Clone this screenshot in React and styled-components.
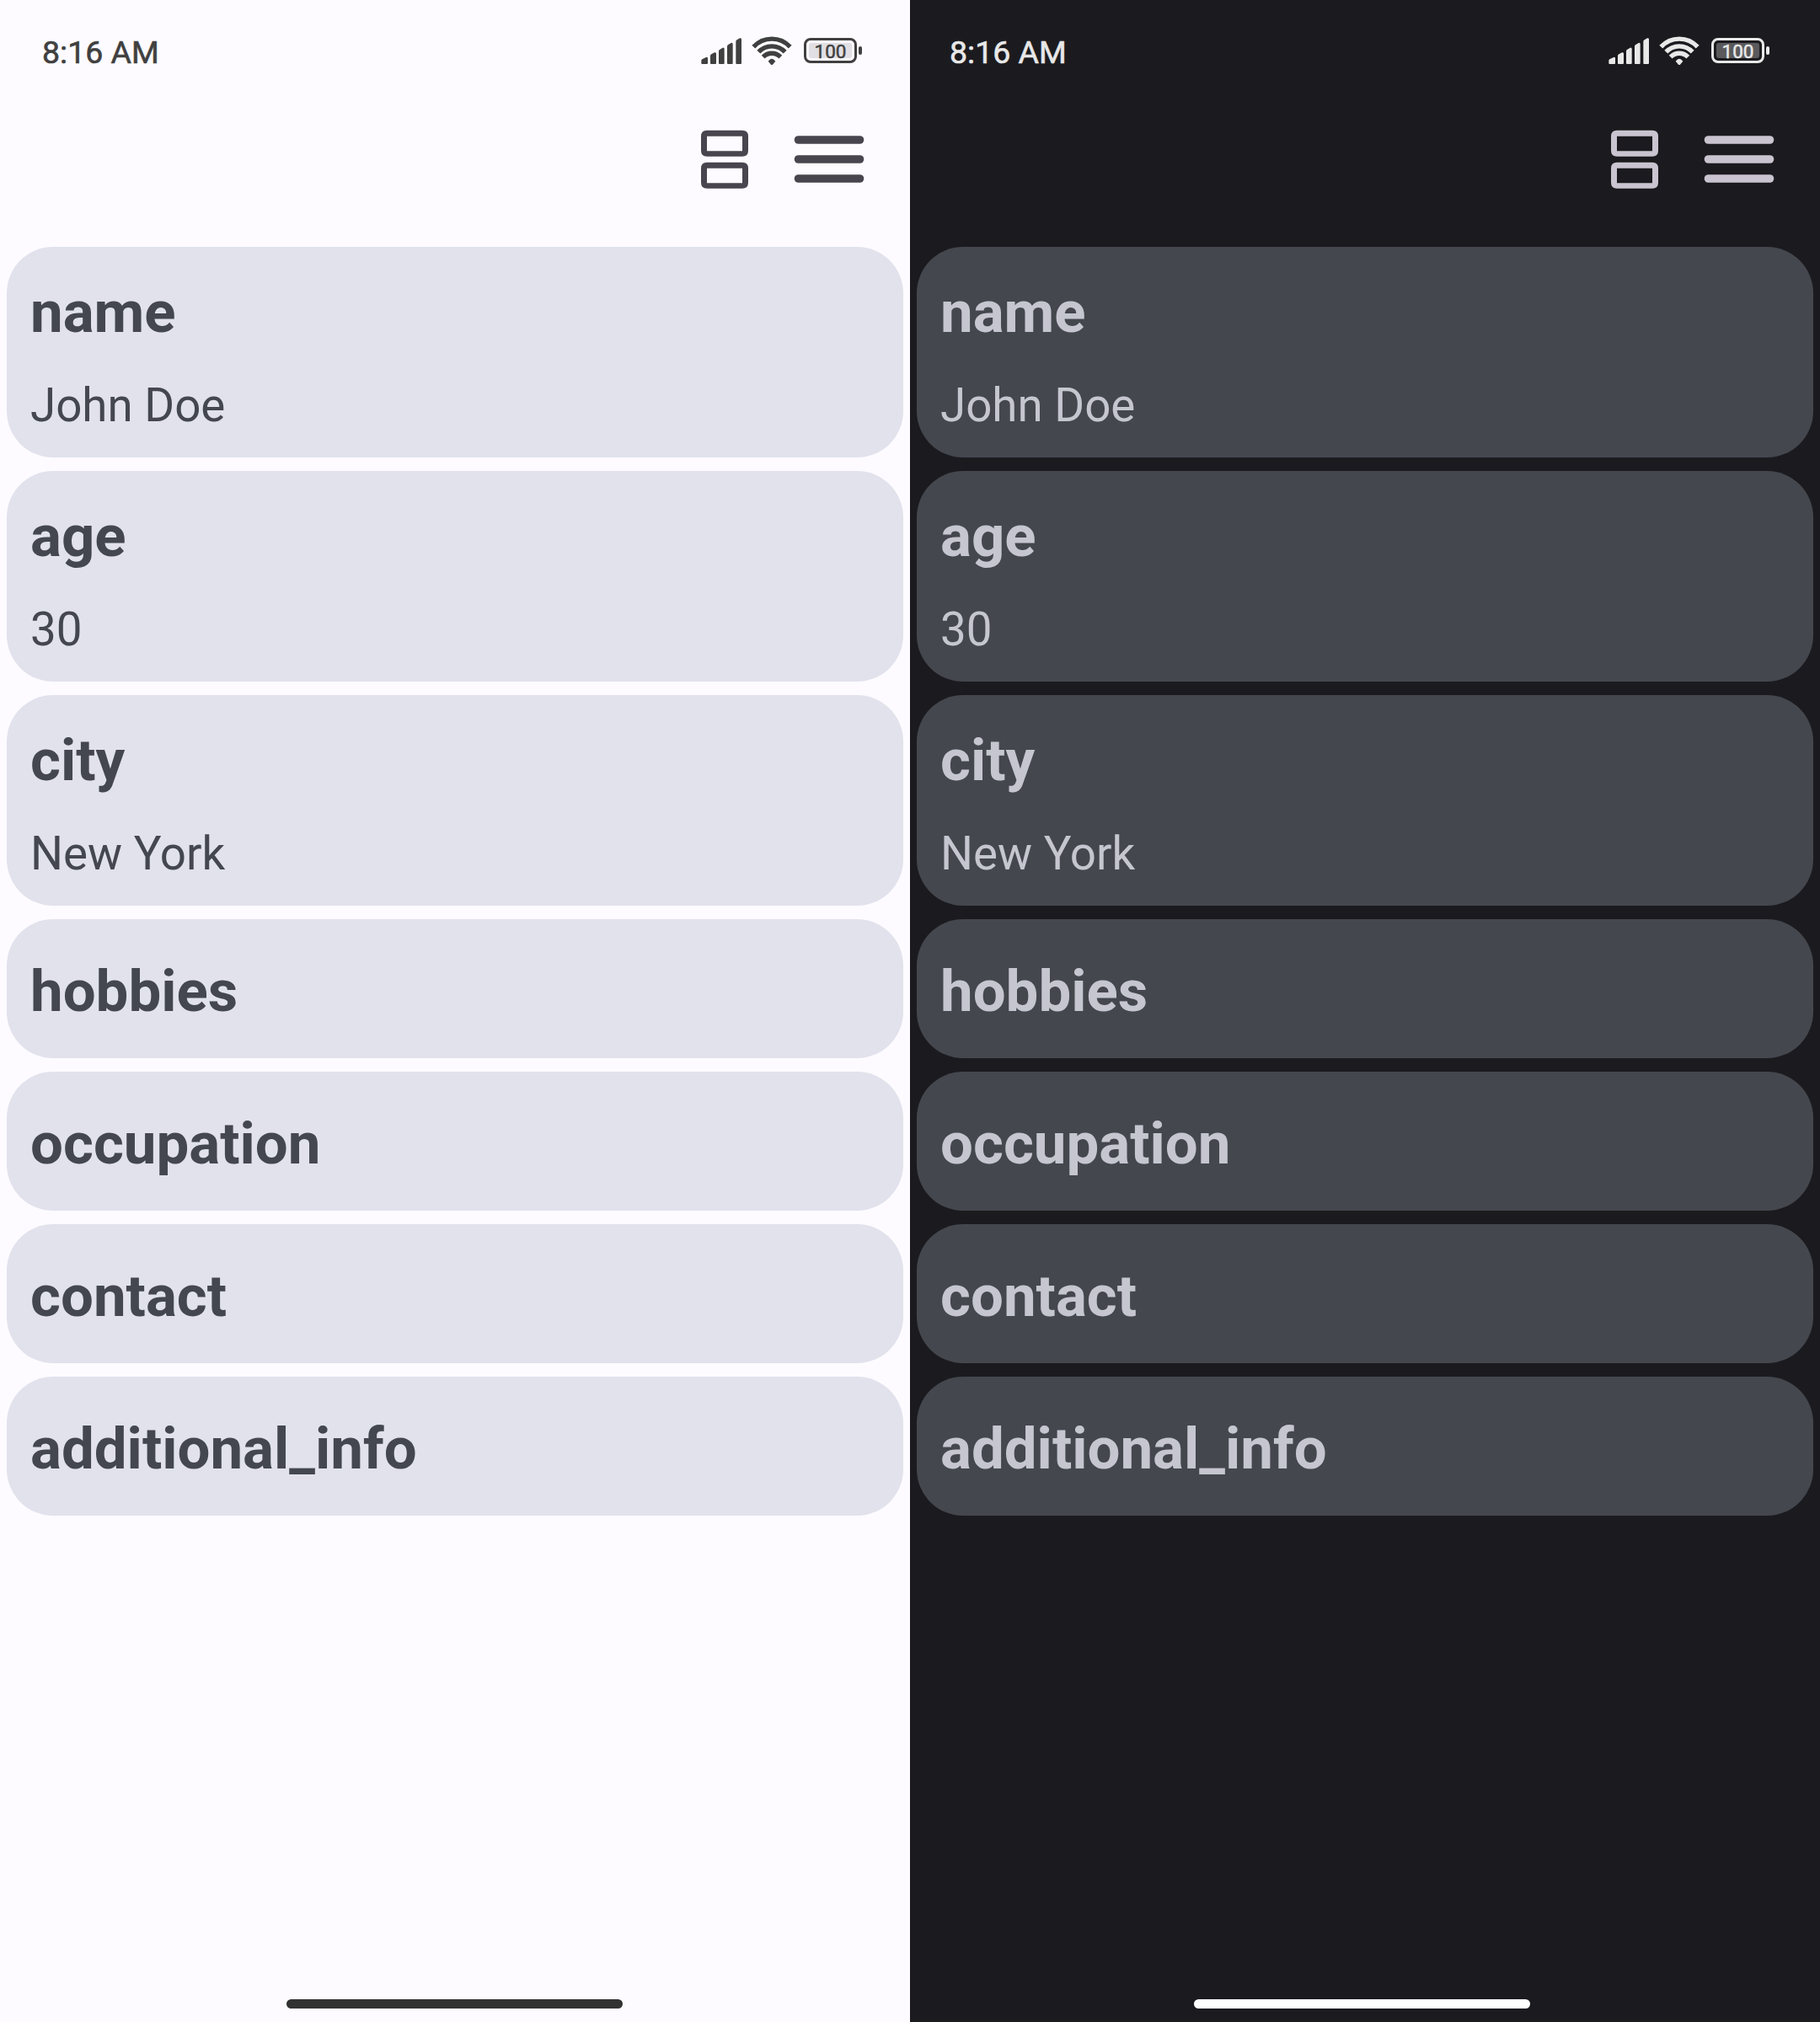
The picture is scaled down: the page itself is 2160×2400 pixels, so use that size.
import React from "react";
import styled, { createGlobalStyle, ThemeProvider } from "styled-components";

const GlobalStyle = createGlobalStyle`
  *, *::before, *::after { box-sizing: border-box; }
  body { margin: 0; font-family: Roboto, "Liberation Sans", sans-serif; }
`;

const light = {
  background: "#fdfbff",
  card: "#e1e2ec",
  text: "#44474f",
  icon: "#49454f",
  status: "#404040",
  charge: "#e1dfe3",
  home: "#323232",
  inset: 0,
};

const dark = {
  background: "#1b1b1f",
  card: "#44474e",
  text: "#c5c6d0",
  icon: "#cac4d0",
  status: "#e8e8e8",
  charge: "#5a5a5c",
  home: "#ffffff",
  inset: 3,
};

const Screens = styled.main`
  display: grid;
  grid-template-columns: 1080px 1080px;
  height: 2400px;
`;

const Screen = styled.section`
  display: flex;
  flex-direction: column;
  height: 2400px;
  background: ${(p) => p.theme.background};
`;

const StatusBar = styled.header`
  display: flex;
  justify-content: space-between;
  align-items: center;
  height: 120px;
  padding: 0 ${(p) => 57 + p.theme.inset}px 0 ${(p) => 50 - p.theme.inset}px;
  color: ${(p) => p.theme.status};
`;

const Clock = styled.time`
  padding-top: 5px;
  font-size: 37.5px;
  line-height: 43px;
  font-weight: 400;
  -webkit-text-stroke: 0.6px currentColor;
`;

const StatusIcons = styled.div`
  display: flex;
  align-items: center;
`;

const Signal = styled.svg`
  width: 49px;
  height: 34px;
  margin-right: 11px;
  fill: currentColor;
`;

const Wifi = styled.svg`
  width: 48px;
  height: 34px;
  margin-right: 14px;
  fill: none;
  stroke: currentColor;
  stroke-width: 16;
`;

const Battery = styled.div`
  display: flex;
  align-items: center;
  gap: 2px;
`;

const BatteryShell = styled.div`
  width: 63px;
  height: 30px;
  padding: 3px;
  border: 3.4px solid currentColor;
  border-radius: 8px;
`;

const BatteryCharge = styled.div`
  display: flex;
  justify-content: center;
  align-items: center;
  height: 100%;
  padding-top: 2px;
  border-radius: 3px;
  background: ${(p) => p.theme.charge};
  font-size: 22.5px;
  line-height: 18px;
  font-weight: 400;
  -webkit-text-stroke: 0.5px currentColor;
`;

const BatteryTip = styled.div`
  width: 4px;
  height: 10px;
  border-radius: 2px;
  background: currentColor;
`;

const Toolbar = styled.nav`
  display: flex;
  justify-content: flex-end;
  align-items: center;
  gap: 54px;
  height: 173px;
  padding: 0 54px 35px 0;
`;

const ToolButton = styled.button`
  display: flex;
  padding: 0;
  border: 0;
  background: none;
  color: ${(p) => p.theme.icon};
`;

const CardList = styled.ul`
  display: flex;
  flex: 1;
  flex-direction: column;
  gap: 16px;
  margin: 0;
  padding: 0 8px;
  list-style: none;
`;

const Card = styled.li`
  display: flex;
  flex-direction: column;
  justify-content: center;
  gap: 38px;
  height: ${(p) => (p.$expanded ? 250 : 165)}px;
  padding: ${(p) => (p.$expanded ? 7 : 5)}px 28px 0;
  border-radius: 55px;
  background: ${(p) => p.theme.card};
  color: ${(p) => p.theme.text};
`;

const Title = styled.h2`
  margin: 0;
  font-size: 69px;
  line-height: 81px;
  font-weight: 700;
`;

const Value = styled.p`
  margin: 0;
  font-size: 54.7px;
  line-height: 64px;
`;

const HomeArea = styled.footer`
  display: flex;
  justify-content: center;
  align-items: flex-end;
  height: 40px;
  padding: 0 ${(p) => 1 + p.theme.inset * 2}px 16px 0;
`;

const HomeIndicator = styled.div`
  width: 399px;
  height: 11px;
  border-radius: 6px;
  background: ${(p) => p.theme.home};
`;

const entries = [
  { title: "name", value: "John Doe" },
  { title: "age", value: "30" },
  { title: "city", value: "New York" },
  { title: "hobbies" },
  { title: "occupation" },
  { title: "contact" },
  { title: "additional_info" },
];

function SignalIcon() {
  return (
    <Signal viewBox="36 39 147 102">
      <path d="M37 135V126Q37 123 40 121L54 114Q60 112 60 118V135Q60 138 57 138H40Q37 138 37 135Z" />
      <path d="M69 135V109Q69 105 73 103L84 97Q90 95 90 101V135Q90 138 87 138H72Q69 138 69 135Z" />
      <path d="M99 135V92Q99 88 103 86L113 80Q119 78 119 84V135Q119 138 116 138H102Q99 138 99 135Z" />
      <path d="M129 135V75Q129 71 133 69L143 63Q149 61 149 67V135Q149 138 146 138H132Q129 138 129 135Z" />
      <path d="M160 135V58Q160 54 164 52L174 46Q180 44 180 50V135Q180 138 177 138H163Q160 138 160 135Z" />
    </Signal>
  );
}

function WifiIcon() {
  return (
    <Wifi viewBox="216 39 144 102">
      <path d="M223 77A88 88 0 0 1 353 77" />
      <path d="M241 95A64 64 0 0 1 335 95" />
      <path d="M257 113A43 43 0 0 1 319 113" />
      <path
        d="M275 128Q288 111 301 128L291 140Q288 142 285 140Z"
        fill="currentColor"
        stroke="none"
      />
    </Wifi>
  );
}

function LayoutIcon() {
  return (
    <svg width="56" height="70" viewBox="0 -0.7 56 70" fill="currentColor" fillRule="evenodd">
      <path d="M7 0H49Q56 0 56 7V24Q56 31 49 31H7Q0 31 0 24V7Q0 0 7 0ZM7 7V24.5H49V7Z" />
      <path d="M7 38H49Q56 38 56 45V62Q56 69 49 69H7Q0 69 0 62V45Q0 38 7 38ZM7 45V62.5H49V45Z" />
    </svg>
  );
}

function MenuIcon() {
  return (
    <svg width="84" height="58" viewBox="0 0 84 58" fill="currentColor">
      <rect x="0.7" y="1.2" width="82.6" height="9.6" rx="4.8" />
      <rect x="0.7" y="24.2" width="82.6" height="9.6" rx="4.8" />
      <rect x="0.7" y="47.2" width="82.6" height="9.6" rx="4.8" />
    </svg>
  );
}

function Phone({ theme }) {
  return (
    <ThemeProvider theme={theme}>
      <Screen>
        <StatusBar>
          <Clock>8:16 AM</Clock>
          <StatusIcons>
            <SignalIcon />
            <WifiIcon />
            <Battery>
              <BatteryShell>
                <BatteryCharge>100</BatteryCharge>
              </BatteryShell>
              <BatteryTip />
            </Battery>
          </StatusIcons>
        </StatusBar>
        <Toolbar>
          <ToolButton aria-label="Layout">
            <LayoutIcon />
          </ToolButton>
          <ToolButton aria-label="Menu">
            <MenuIcon />
          </ToolButton>
        </Toolbar>
        <CardList>
          {entries.map(({ title, value }) => (
            <Card key={title} $expanded={Boolean(value)}>
              <Title>{title}</Title>
              {value && <Value>{value}</Value>}
            </Card>
          ))}
        </CardList>
        <HomeArea>
          <HomeIndicator />
        </HomeArea>
      </Screen>
    </ThemeProvider>
  );
}

export default function App() {
  return (
    <>
      <GlobalStyle />
      <Screens>
        <Phone theme={light} />
        <Phone theme={dark} />
      </Screens>
    </>
  );
}
